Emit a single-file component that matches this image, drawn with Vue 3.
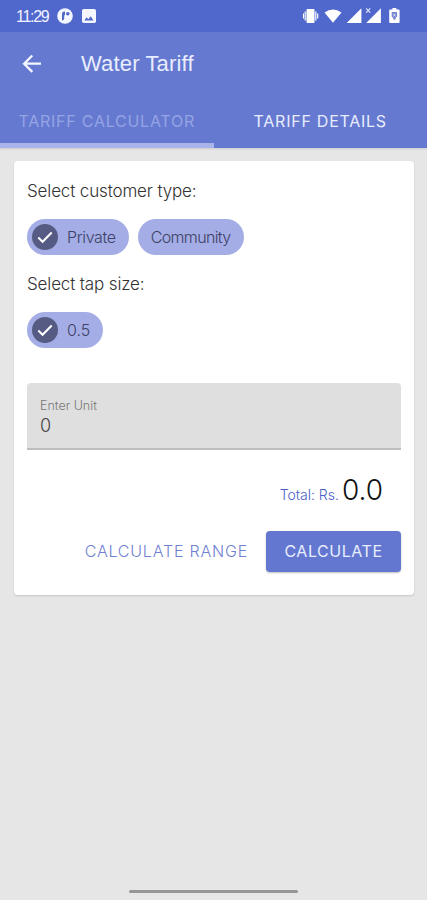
<script setup>
import { ref } from 'vue'

const tabs = ['Tariff Calculator', 'Tariff Details']
const activeTab = ref(0)
const customerTypes = ['Private', 'Community']
const customer = ref('Private')
const tapSizes = ['0.5']
const tapSize = ref('0.5')
const unit = ref('0')
const total = ref('0.0')
</script>

<template>
  <div class="screen">
    <header class="status">
      <span class="clock">11:29</span>
      <svg class="app-dot" width="16" height="16" viewBox="0 0 16 16">
        <circle cx="8" cy="8" r="7.8" fill="#f4f6ff" />
        <path d="M5 12.500V6Q5 3.600 7.400 3.600H8v3.600H7.200v3.300q0 2-2.200 2z" fill="#5068cc" />
        <circle cx="10.800" cy="5.800" r="1.800" fill="#5068cc" />
      </svg>
      <svg class="picture" width="14" height="14" viewBox="0 0 14 14">
        <rect width="14" height="14" rx="1.8" fill="#f4f6ff" />
        <path d="M2.4 11.4 4.6 8.3l1.7 2 2.3-3 3 4.1z" fill="#5068cc" />
      </svg>
      <span class="grow"></span>
      <svg width="98" height="18" viewBox="0 0 98 18" fill="#fff">
        <rect x="3.500" y="2" width="8" height="14" rx="1" />
        <path d="M1.600 4.500h1.200v9H1.600zM12.200 4.500h1.200v9h-1.200zM0 6.500h1v5H0zM14.100 6.500h1.200v5h-1.200z" />
        <path d="M21.500 5.4Q30-.2 38.500 5.400L30 15.800z" />
        <path d="M43.700 16 58.400 1.300V16zM63.200 16 77.900 1.300V16z" />
        <path d="m63.200 1.400 4 4.200m0-4.200-4 4.200" stroke="#dfe5ff" stroke-width="1.200" />
        <path d="M87.200 2.500h2.200V1h4v1.500h2.200q1 0 1 1V15q0 1-1 1h-8.400q-1 0-1-1V3.500q0-1 1-1z" />
        <path d="M88.700 5h5.400v4.500l-1.700 1.700v1.600h-2v-1.600l-1.700-1.700z" fill="#7282d2" />
        <path d="m90 6.500 2.600 3M92.500 6.500l-2.200 3" stroke="#fff" stroke-width=".7" />
      </svg>
    </header>

    <div class="appbar">
      <div class="title-row">
        <svg class="back" width="20" height="20" viewBox="0 0 20 20" fill="none" stroke="#f4f6ff" stroke-width="2.300">
          <path d="M19 9.700H2.500M10.300 1.500 2.100 9.700l8.200 8.200" />
        </svg>
        <h1>Water Tariff</h1>
      </div>
      <nav>
        <button v-for="(t, i) in tabs" :key="t" :class="['tab', { active: activeTab === i }]" @click="activeTab = i">
          {{ t }}
        </button>
      </nav>
    </div>

    <main class="card">
      <p class="label">Select customer type:</p>
      <div class="chips">
        <button v-for="c in customerTypes" :key="c" :class="['chip', { on: customer === c }]" @click="customer = c">
          <svg v-if="customer === c" width="26" height="26" viewBox="0 0 26 26">
            <circle cx="13" cy="13" r="13" fill="#555b83" />
            <path d="m6.300 13.500 4.300 4.300 9.100-9.300" fill="none" stroke="#fff" stroke-width="2" />
          </svg>
          <span>{{ c }}</span>
        </button>
      </div>
      <p class="label tap-label">Select tap size:</p>
      <div class="chips">
        <button v-for="s in tapSizes" :key="s" :class="['chip', { on: tapSize === s }]" @click="tapSize = s">
          <svg v-if="tapSize === s" width="26" height="26" viewBox="0 0 26 26">
            <circle cx="13" cy="13" r="13" fill="#555b83" />
            <path d="m6.300 13.500 4.300 4.300 9.100-9.300" fill="none" stroke="#fff" stroke-width="2" />
          </svg>
          <span class="size">{{ s }}</span>
        </button>
      </div>
      <div class="field">
        <span class="hint">Enter Unit</span>
        <span class="value">{{ unit }}</span>
      </div>
      <div class="total">
        <span class="total-label">Total: Rs.</span>
        <span class="amount">{{ total }}</span>
      </div>
      <div class="actions">
        <button class="text-btn">CALCULATE RANGE</button>
        <button class="fill-btn">CALCULATE</button>
      </div>
    </main>
    <span class="grow"></span>
    <div class="home-bar"></div>
  </div>
</template>

<style>
body {
  background: #e6e6e6;
}
</style>

<style scoped>
* {
  box-sizing: border-box;
}
.screen {
  width: 427px;
  height: 900px;
  display: flex;
  flex-direction: column;
  background: #e6e6e6;
  font-family: Inter, "Liberation Sans", sans-serif;
  font-weight: 300;
  overflow: hidden;
}
button {
  font: inherit;
  border: 0;
  padding: 0;
  background: none;
  white-space: nowrap;
}
svg {
  flex: none;
}
.grow {
  flex: 1;
}
.status {
  flex: none;
  height: 32px;
  background: #5068cc;
  display: flex;
  align-items: center;
  padding: 0 26px 0 16px;
}
.clock {
  width: 41px;
  padding-top: 1px;
  font: 400 16px/20px "Liberation Sans", sans-serif;
  letter-spacing: -1.300px;
  color: #f0f3ff;
}
.picture {
  margin-left: 9px;
}
.appbar {
  flex: none;
  height: 116px;
  background: #6579d0;
  box-shadow: 0 1px 2px rgba(0, 0, 0, 0.12);
}
.title-row {
  height: 63px;
  display: flex;
  align-items: center;
  padding-left: 22px;
}
h1 {
  margin: 0 0 0 39px;
  font: 400 22px/28px "Liberation Sans", sans-serif;
  letter-spacing: 0.150px;
  color: #e8edff;
}
nav {
  display: flex;
  height: 53px;
}
.tab {
  width: 50%;
  height: 53px;
  padding-top: 3px;
  border-bottom: 5px solid transparent;
  font-size: 16px;
  line-height: 20px;
  text-transform: uppercase;
  letter-spacing: 0.750px;
  font-weight: 400;
  color: #e8edff;
}
.tab.active {
  color: #95a4e4;
  border-bottom-color: #a8b4ea;
}
.card {
  flex: none;
  width: 400px;
  height: 434px;
  margin: 13px 0 0 14px;
  padding: 0 13px;
  background: #fff;
  border-radius: 4px;
  box-shadow: 0 1px 2px rgba(0, 0, 0, 0.14);
}
.label {
  margin: 0;
  padding-top: 18px;
  font-size: 17px;
  line-height: 24px;
  letter-spacing: -0.140px;
  color: #333;
}
.tap-label {
  padding-top: 17px;
}
.chips {
  display: flex;
  gap: 9px;
  padding-top: 16px;
}
.chip {
  height: 36px;
  display: flex;
  align-items: center;
  padding: 0 13px;
  border-radius: 18px;
  background: #a4ade5;
  color: #3e4265;
  font-size: 16px;
  line-height: 24px;
  letter-spacing: -0.650px;
}
.chip.on {
  padding-left: 5px;
  gap: 9px;
  letter-spacing: -0.350px;
}
.chip .size {
  letter-spacing: 0;
}
.field {
  margin-top: 35px;
  height: 67px;
  display: flex;
  flex-direction: column;
  padding: 14px 13px 0;
  background: #dfdfdf;
  border-bottom: 2px solid #bdbdbd;
  border-radius: 4px 4px 0 0;
}
.hint {
  font-size: 12.500px;
  line-height: 18px;
  color: #777;
}
.value {
  font-size: 18px;
  line-height: 22px;
  color: #444;
}
.total {
  height: 81px;
  padding: 23px 18px 0 0;
  display: flex;
  justify-content: flex-end;
  align-items: baseline;
  gap: 3px;
}
.total-label {
  font-size: 14px;
  color: #4a60c8;
}
.amount {
  font-size: 28px;
  line-height: 34px;
  color: #111;
}
.actions {
  display: flex;
  justify-content: flex-end;
  align-items: center;
  gap: 18px;
}
.text-btn {
  padding-bottom: 1px;
  font-size: 16px;
  letter-spacing: 0.800px;
  color: #7181d2;
}
.fill-btn {
  width: 135px;
  height: 41px;
  padding-bottom: 1px;
  border-radius: 4px;
  background: #6377d0;
  box-shadow: 0 1px 2px rgba(0, 0, 0, 0.25);
  color: #e8edff;
  font-size: 16px;
  font-weight: 400;
  letter-spacing: 0.550px;
}
.home-bar {
  flex: none;
  width: 169px;
  height: 3px;
  border-radius: 2px;
  background: #969696;
  margin: 0 0 7px 129px;
}
</style>
